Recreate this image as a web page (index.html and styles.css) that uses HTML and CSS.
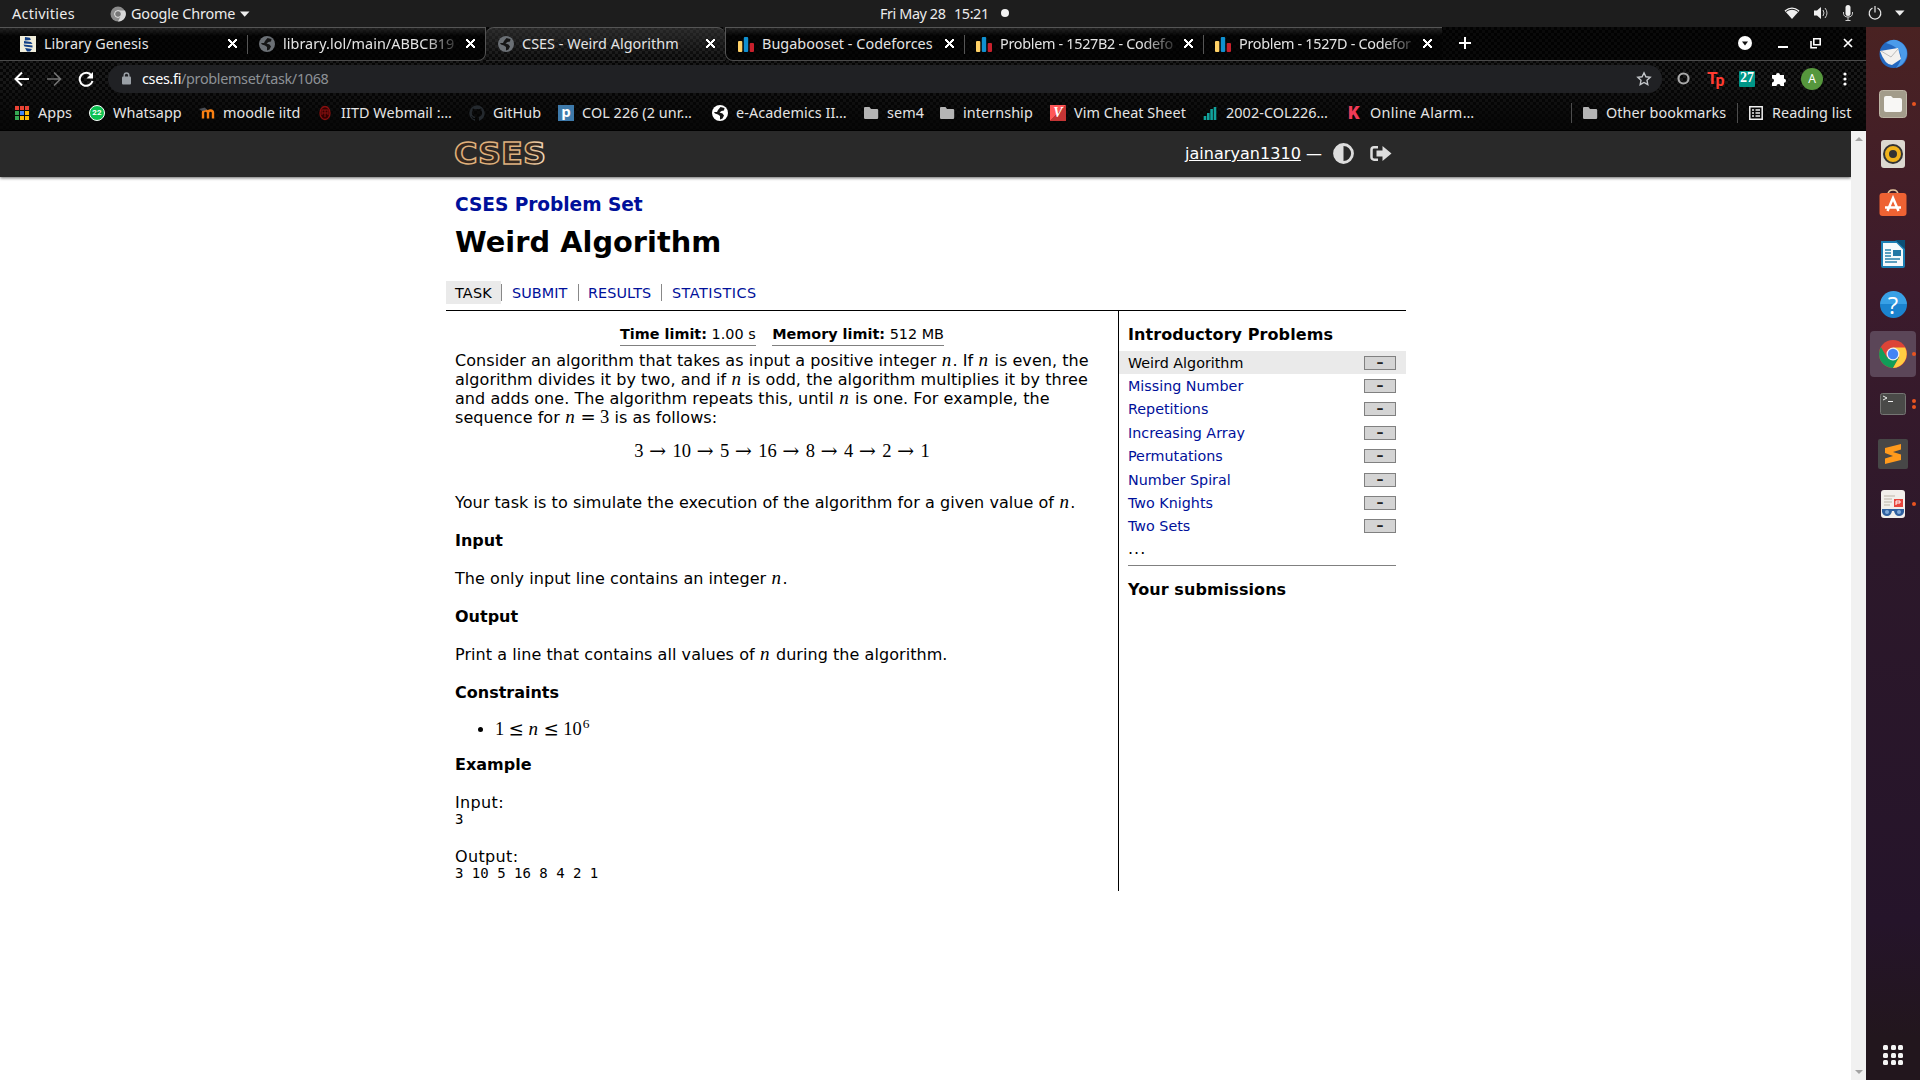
FILE: index.html
```
<!DOCTYPE html>
<html lang="en">
<head>
<meta charset="utf-8">
<title>CSES - Weird Algorithm</title>
<link rel="stylesheet" href="styles.css">
</head>
<body>
<svg class="defs" width="0" height="0">
  <symbol id="globe" viewBox="0 0 16 16"><circle cx="8" cy="8" r="8" fill="currentColor"/><path class="land" d="M8.500 2l4 1-.5 2.500-2.500.5-2 1.500 3 1 1.500 2-1.500 3-2.500 1V11L6 9.500 3 8.500 2 7l3 0 1-2z"/></symbol>
  <symbol id="bars" viewBox="0 0 16 16"><rect y="5" width="4.300" height="11" rx="1" fill="#ffd166"/><rect x="5.800" y="1" width="4.400" height="15" rx="1" fill="#1090d0"/><rect x="11.700" y="7" width="4.300" height="9" rx="1" fill="#c8202c"/></symbol>
  <symbol id="folder" viewBox="0 0 16 16"><path d="M1.500 2h5l1.500 2h6a1.200 1.200 0 0 1 1.200 1.200v7.600A1.200 1.200 0 0 1 14 14H2.200A1.200 1.200 0 0 1 1 12.800V3z" fill="#b4b4b4"/></symbol>
</svg>

<header class="topbar">
  <div class="top-left">
    <span class="activities">Activities</span>
    <svg width="16" height="16" viewBox="0 0 16 16"><circle cx="8" cy="8" r="7.500" fill="#8b8b8b"/><path d="M8 4.500h7A7.500 7.500 0 0 1 8 15.500l3-6z" fill="#d8d8d8"/><circle cx="8" cy="8" r="3.400" fill="#777" stroke="#e8e8e8"/></svg>
    <span class="app-name">Google Chrome</span>
    <svg width="10" height="6" viewBox="0 0 10 6"><path d="M0 .5h9.500L4.700 5.800z" fill="#eee"/></svg>
  </div>
  <div class="clock"><span>Fri May 28</span><span>15:21</span><i></i></div>
  <div class="tray">
    <svg width="16" height="14" viewBox="0 0 16 14"><path d="M.5 4.500Q8-1.500 15.500 4.500L8 13z" fill="#f0f0f0"/><path d="M2 5.500Q8 1 14 5.500" stroke="#1d1d1d" fill="none"/></svg>
    <svg width="16" height="14" viewBox="0 0 16 14"><path d="M1 4.500h3L8 1v12L4 9.500H1z" fill="#f0f0f0"/><path d="M10 4q2 3 0 6M12 2q4 5 0 10" stroke="#ccc" fill="none"/></svg>
    <svg width="12" height="16" viewBox="0 0 12 16"><rect x="3.500" y="0" width="5" height="11" rx="2.500" fill="#f0f0f0"/><path d="M1.500 7v1q0 4 4.500 4t4.500-4V7M6 12v3M3.500 15.500h5" stroke="#ccc" fill="none"/></svg>
    <svg width="14" height="14" viewBox="0 0 14 14"><path d="M4.500 2a5.800 5.800 0 1 0 5 0M7 0v6.500" stroke="#e8e8e8" stroke-width="1.200" fill="none"/></svg>
    <svg width="10" height="6" viewBox="0 0 10 6"><path d="M0 .5h9.500L4.700 5.800z" fill="#eee"/></svg>
  </div>
</header>

<div class="desktop">
<div class="browser">
  <div class="chrome">
    <div class="tabs">
      <div class="tab"><svg width="16" height="16" viewBox="0 0 16 16"><rect width="16" height="16" fill="#f1eedc"/><path d="M5 1l5 .7.8 2.300-6 .5zM4 5l7 1 1.500 2L4 7.500zM3.500 8.500l9 1v2l-8-1zM5 12l7 1-2 2.500H7z" fill="#123f86"/></svg><span class="label">Library Genesis</span><b class="x"></b></div>
      <div class="tab before"><svg class="grey" width="16" height="16"><use href="#globe"/></svg><span class="label fade">library.lol/main/ABBCB19</span><b class="x"></b></div>
      <div class="tab active"><svg class="grey" width="16" height="16"><use href="#globe"/></svg><span class="label">CSES - Weird Algorithm</span><b class="x"></b></div>
      <div class="tab after"><svg width="16" height="16"><use href="#bars"/></svg><span class="label">Bugabooset - Codeforces</span><b class="x"></b></div>
      <div class="tab"><svg width="16" height="16"><use href="#bars"/></svg><span class="label fade tight">Problem - 1527B2 - Codefo</span><b class="x"></b></div>
      <div class="tab"><svg width="16" height="16"><use href="#bars"/></svg><span class="label fade tight">Problem - 1527D - Codefor</span><b class="x"></b></div>
      <div class="tab-tools">
        <svg width="12" height="12" viewBox="0 0 12 12"><path d="M6 0v12M0 6h12" stroke="#fff" stroke-width="2"/></svg>
        <div class="window-tools">
          <svg width="14" height="14" viewBox="0 0 14 14"><circle cx="7" cy="7" r="7" fill="#fff"/><path d="M4 5.500h6L7 9.500z" fill="#111"/></svg>
          <svg width="10" height="10" viewBox="0 0 10 10"><path d="M0 9h10" stroke="#fff" stroke-width="2"/></svg>
          <svg width="11" height="11" viewBox="0 0 11 11"><path d="M3.800.8h6.400v6H3.800zM1 3v6.800h6" stroke="#fff" stroke-width="1.600" fill="none"/></svg>
          <svg width="10" height="10" viewBox="0 0 10 10"><path d="M1 1l8 8M9 1L1 9" stroke="#fff" stroke-width="1.700"/></svg>
        </div>
      </div>
    </div>
    <div class="toolbar">
      <svg width="16" height="16" viewBox="0 0 16 16"><path d="M15 8H2M8 1.500L1.500 8 8 14.500" stroke="#fff" stroke-width="2" fill="none"/></svg>
      <svg width="16" height="16" viewBox="0 0 16 16"><path d="M1 8h13M8 1.500L14.500 8 8 14.500" stroke="#747474" stroke-width="1.600" fill="none"/></svg>
      <svg width="16" height="16" viewBox="0 0 16 16"><path d="M13.500 4.500A6.500 6.500 0 1 0 14.500 10" stroke="#fff" stroke-width="2" fill="none"/><path d="M15 1v6.500H8.500z" fill="#fff"/></svg>
      <div class="address">
        <svg width="10" height="13" viewBox="0 0 10 13"><rect y="4.500" width="9" height="8" rx="1" fill="#9aa0a6"/><path d="M2.200 5V3.300a2.300 2.300 0 0 1 4.600 0V5" stroke="#9aa0a6" stroke-width="1.400" fill="none"/></svg>
        <span class="url"><span class="host">cses.fi</span>/problemset/task/1068</span>
        <svg width="16" height="16" viewBox="0 0 16 16"><path d="M8 1.800l1.900 4 4.300.5-3.200 3 .8 4.400L8 11.500l-3.800 2.200.8-4.400-3.200-3 4.300-.5z" stroke="#c4c7cb" stroke-width="1.400" fill="none"/></svg>
      </div>
      <div class="extensions">
        <svg width="13" height="13" viewBox="0 0 13 13"><circle cx="6.500" cy="6.500" r="5" stroke="#aaa" stroke-width="2.200" fill="none"/></svg>
        <span class="tp">T<small>p</small></span>
        <span class="teal">27</span>
        <svg width="16" height="16" viewBox="0 0 16 16"><path d="M1 4h4a2 2 0 1 1 4 0h4v3.700a2 2 0 1 1 0 4V15H9.500a2 2 0 1 0-4 0H1v-3.600a2 2 0 1 0 0-4z" fill="#fff"/></svg>
        <span class="avatar">A</span>
        <svg width="4" height="14" viewBox="0 0 4 14"><g fill="#fff"><circle cx="2" cy="2" r="1.600"/><circle cx="2" cy="7" r="1.600"/><circle cx="2" cy="12" r="1.600"/></g></svg>
      </div>
    </div>
    <div class="bookmarks">
      <div class="bm"><svg width="16" height="16" viewBox="0 0 16 16"><path d="M1 1h4v4H1zM6 1h4v4H6zM11 1h4v4h-4z" fill="#ea4335"/><path d="M1 6h4v4H1zM1 11h4v4H1z" fill="#34a853"/><path d="M6 6h4v4H6z" fill="#4285f4"/><path d="M11 6h4v4h-4zM6 11h4v4H6zM11 11h4v4h-4z" fill="#fbbc05"/><path d="M5.500 0v16M10.500 0v16M0 5.500h16M0 10.500h16" stroke="#0a0a0a"/></svg><span>Apps</span></div>
      <div class="bm"><span class="wa">22</span><span>Whatsapp</span></div>
      <div class="bm"><svg width="16" height="16" viewBox="0 0 16 16"><path d="M4 13.500V8a2.400 2.400 0 0 1 5 0v5.500M9 13.500V8a2.400 2.400 0 0 1 5 0v5.500" stroke="#f98012" stroke-width="2.400" fill="none"/><path d="M0 4l6-1.500L8 5 3 6z" fill="#4c4f55"/></svg><span>moodle iitd</span></div>
      <div class="bm"><svg width="16" height="16" viewBox="0 0 16 16"><ellipse cx="8" cy="8" rx="5" ry="6.500" fill="#300" stroke="#8a1010" stroke-width="1.300"/><path d="M5 10V5h6v5M8 5v7M5 8h6" stroke="#8a1010" fill="none"/></svg><span>IITD Webmail :…</span></div>
      <div class="bm"><svg width="16" height="16" viewBox="0 0 16 16"><path d="M8 .3a8 8 0 0 0-2.500 15.500c.4.100.5-.2.500-.4v-1.500c-2.200.5-2.700-1-2.700-1-.4-.9-.9-1.100-.9-1.100-.7-.5.100-.5.100-.5.800.100 1.200.8 1.200.8.700 1.300 1.900.9 2.300.7 0-.5.300-.9.500-1.100-1.800-.2-3.600-.9-3.600-4 0-.9.300-1.600.8-2.100 0-.200-.300-1 .1-2.100 0 0 .7-.2 2.200.8a7.600 7.600 0 0 1 4 0c1.500-1 2.200-.8 2.200-.8.400 1.100.100 1.900.100 2.100.5.600.8 1.300.8 2.100 0 3.100-1.900 3.800-3.700 4 .300.300.6.800.6 1.500v2.200c0 .200.100.500.500.400A8 8 0 0 0 8 .3z" fill="#24292e"/></svg><span>GitHub</span></div>
      <div class="bm"><span class="pz">p</span><span>COL 226 (2 unr…</span></div>
      <div class="bm"><svg class="white" width="16" height="16"><use href="#globe"/></svg><span>e-Academics II…</span></div>
      <div class="bm"><svg width="16" height="16"><use href="#folder"/></svg><span>sem4</span></div>
      <div class="bm"><svg width="16" height="16"><use href="#folder"/></svg><span>internship</span></div>
      <div class="bm"><span class="vim">V</span><span>Vim Cheat Sheet</span></div>
      <div class="bm"><svg width="16" height="16" viewBox="0 0 16 16"><path d="M3 15v-4M6.300 15V8M9.600 15V4M13 15V2" stroke="#11a39c" stroke-width="2.600"/></svg><span>2002-COL226…</span></div>
      <div class="bm wide"><span class="kk">K</span><span>Online Alarm…</span></div>
      <div class="bm other"><svg width="16" height="16"><use href="#folder"/></svg><span>Other bookmarks</span></div>
      <div class="bm reading"><svg width="16" height="16" viewBox="0 0 16 16"><path d="M1.800 1.800h12.400v12.400H1.800zM4 5h2M7.500 5H12M4 8h2M7.500 8H12M4 11h2M7.500 11H12" stroke="#f0f0f0" stroke-width="1.500" fill="none"/></svg><span>Reading list</span></div>
    </div>
  </div>

  <div class="viewport">
    <div class="page">
      <div class="site-head">
        <div class="inner">
          <svg class="logo" width="92" height="24" viewBox="0 0 92 24"><defs><linearGradient id="gold"><stop offset="0" stop-color="#e3b27c"/><stop offset=".8" stop-color="#dcb27f"/><stop offset="1" stop-color="#f4dfc4"/></linearGradient></defs><text x="-1" y="22.500" textLength="92" lengthAdjust="spacingAndGlyphs">CSES</text></svg>
          <div class="account"><a>jainaryan1310</a><span>—</span>
            <svg width="21" height="21" viewBox="0 0 21 21"><circle cx="10.500" cy="10.500" r="9" fill="none" stroke="#ddd" stroke-width="2.800"/><path d="M10.500 1a9.500 9.500 0 0 0 0 19z" fill="#ddd"/></svg>
            <svg width="22" height="18" viewBox="0 0 22 18"><path d="M8 2.300H4A2.500 2.500 0 0 0 1.500 4.800v7.400A2.500 2.500 0 0 0 4 14.700h4" stroke="#ddd" stroke-width="2.500" fill="none"/><path d="M6.500 5.500h6V1L21.500 8.500 12.500 16v-4.500h-6z" fill="#ddd"/></svg>
          </div>
        </div>
      </div>
      <div class="container">
        <div class="titles"><h3>CSES Problem Set</h3><h1>Weird Algorithm</h1></div>
        <nav><a class="current">TASK</a><a>SUBMIT</a><a>RESULTS</a><a class="stats">STATISTICS</a></nav>
        <div class="columns">
          <main>
            <ul class="limits"><li><b>Time limit:</b> 1.00 s</li><li><b>Memory limit:</b> 512 MB</li></ul>
            <p>Consider an algorithm that takes as input a positive integer <i class="n">n</i>. If <i class="n">n</i> is even, the<br>algorithm divides it by two, and if <i class="n">n</i> is odd, the algorithm multiplies it by three<br>and adds one. The algorithm repeats this, until <i class="n">n</i> is one. For example, the<br>sequence for <i class="n">n</i><span class="rel">=</span><span class="d">3</span> is as follows:</p>
            <div class="formula"><span>3</span><span class="to">→</span><span>10</span><span class="to">→</span><span>5</span><span class="to">→</span><span>16</span><span class="to">→</span><span>8</span><span class="to">→</span><span>4</span><span class="to">→</span><span>2</span><span class="to">→</span><span>1</span></div>
            <p>Your task is to simulate the execution of the algorithm for a given value of <i class="n">n</i>.</p>
            <h4>Input</h4>
            <p>The only input line contains an integer <i class="n">n</i>.</p>
            <h4>Output</h4>
            <p>Print a line that contains all values of <i class="n">n</i> during the algorithm.</p>
            <h4>Constraints</h4>
            <ul class="bounds"><li><span class="d">1</span><span class="rel">≤</span><i class="n">n</i><span class="rel">≤</span><span class="d">10</span><span class="d sup">6</span></li></ul>
            <h4>Example</h4>
            <p class="io">Input:</p><pre>3</pre>
            <p class="io">Output:</p><pre>3 10 5 16 8 4 2 1</pre>
          </main>
          <aside>
            <h4>Introductory Problems</h4>
            <div class="row here"><a>Weird Algorithm</a><span class="score">–</span></div>
            <div class="row"><a>Missing Number</a><span class="score">–</span></div>
            <div class="row"><a>Repetitions</a><span class="score">–</span></div>
            <div class="row"><a>Increasing Array</a><span class="score">–</span></div>
            <div class="row"><a>Permutations</a><span class="score">–</span></div>
            <div class="row"><a>Number Spiral</a><span class="score">–</span></div>
            <div class="row"><a>Two Knights</a><span class="score">–</span></div>
            <div class="row"><a>Two Sets</a><span class="score">–</span></div>
            <div class="more">...</div>
            <hr>
            <h4>Your submissions</h4>
          </aside>
        </div>
      </div>
    </div>
    <div class="scrollbar"><svg width="8" height="4" viewBox="0 0 8 4"><path d="M4 0l4 4H0z" fill="#a3a3a3"/></svg><svg width="8" height="4" viewBox="0 0 8 4"><path d="M0 0h8L4 4z" fill="#a3a3a3"/></svg></div>
  </div>
</div>

<div class="dock">
  <div class="app"><svg width="30" height="30" viewBox="0 0 30 30"><circle cx="15.500" cy="15" r="14" fill="#2468c0"/><path d="M8 4Q16-3 25 5q6 7 3 14-2 7-10 10 7-8 4-15-3-7-14-10z" fill="#4b9bea"/><path d="M2 12L20 9l3 11-9 6q-7 0-12-14z" fill="#f3f1ef"/><path d="M3 12l10 6 7-8" stroke="#bbb" fill="none"/></svg></div>
  <div class="app one"><svg width="28" height="28" viewBox="0 0 28 28"><rect x=".5" y=".5" width="27" height="27" rx="3" fill="#a39c8b" stroke="#bdb5a5"/><path d="M5 8q0-2 2-2h5l2 2h7q2 0 2 2v10q0 2-2 2H7q-2 0-2-2z" fill="#f8f7f5"/></svg></div>
  <div class="app"><svg width="24" height="28" viewBox="0 0 24 28"><rect width="24" height="28" rx="3" fill="#dcd8d0"/><circle cx="12" cy="14" r="10" fill="#333"/><circle cx="12" cy="14" r="6" fill="none" stroke="#f0b31c" stroke-width="4"/></svg></div>
  <div class="app up"><svg width="28" height="28" viewBox="0 0 28 28"><path d="M9 6q0-5 5-5t5 5" stroke="#e8c9a0" stroke-width="1.500" fill="none"/><rect x=".5" y="4" width="27" height="23" rx="3" fill="#ee6233"/><path d="M8.500 22L14 9l5.500 13M6 18.500h16" stroke="#fff" stroke-width="2.500" fill="none"/></svg></div>
  <div class="app"><svg width="24" height="28" viewBox="0 0 24 28"><path d="M1 2h15l7 7v17q0 1-1 1H2q-1 0-1-1z" fill="#f5f9fb" stroke="#1c7fb4" stroke-width="2"/><path d="M14 0h10v9z" fill="#0b4f76"/><path d="M4 10h6M4 13h6M4 16h6M4 19h15M4 22h12" stroke="#2880aa" stroke-width="1.300"/><rect x="12" y="10" width="8" height="6" fill="#2378a5"/></svg></div>
  <div class="app"><span class="help">?</span></div>
  <div class="app one focused"><svg width="28" height="28" viewBox="0 0 28 28"><circle cx="14" cy="14" r="14" fill="#dc4437"/><path d="M1.900 7A14 14 0 0 0 14 28l6-10.500H8z" fill="#109d58"/><path d="M14 28A14 14 0 0 0 26.100 7.500H14l6 10z" fill="#ffcd42"/><circle cx="14" cy="14" r="6.500" fill="#f1f1f1"/><circle cx="14" cy="14" r="5.200" fill="#4384f5"/></svg></div>
  <div class="app two"><svg width="26" height="22" viewBox="0 0 26 22"><rect x=".5" y=".5" width="25" height="21" rx="2" fill="#4a4a48" stroke="#757573"/><path d="M3 3l4 2-4 2M8 8.500h5" stroke="#eee" fill="none"/></svg></div>
  <div class="app"><svg width="30" height="30" viewBox="0 0 30 30"><rect width="30" height="30" rx="2" fill="#474747"/><path d="M7 9l16-4v5.500l-8 2.500 8 2.500V21L7 25v-5.500l8-2.500-8-3z" fill="#ff9a1c"/></svg></div>
  <div class="app one"><svg width="24" height="28" viewBox="0 0 24 28"><rect width="24" height="28" rx="3" fill="#f2efeb"/><path d="M3 6h11M3 9h8M3 12h8M3 15h6" stroke="#bbb5a8"/><rect x="13" y="9" width="9" height="8" fill="#e8453c"/><path d="M15 15v-4h4v2h-4" stroke="#fff" fill="none"/><path d="M1 19h22v3q-1 4-5 4t-5-5h-2q-1 5-5 5t-5-4z" fill="#2f609f"/><circle cx="6" cy="22" r="2" fill="#7fa8d8"/><circle cx="18" cy="22" r="2" fill="#7fa8d8"/></svg></div>
  <div class="all-apps"><i></i><i></i><i></i><i></i><i></i><i></i><i></i><i></i><i></i></div>
</div>
</div>
</body>
</html>
```
FILE: styles.css
```
* { box-sizing: border-box; }
body { margin: 0; width: 1920px; height: 1080px; overflow: hidden; display: flex; flex-direction: column; background: #fff; font: 14.4px "Noto Sans", sans-serif; }
svg { display: block; flex: none; }
.defs { position: absolute; }

/* GNOME top bar */
.topbar { height: 27px; flex: none; background: #1d1d1d; color: #ececec; display: grid; grid-template-columns: 1fr 132px 1fr; align-items: center; line-height: 25px; }
.top-left { display: flex; align-items: center; padding-left: 12px; }
.activities { width: 98px; letter-spacing: .3px; }
.app-name { padding-left: 5px; width: 114px; letter-spacing: -.15px; }
.clock { display: flex; align-items: center; gap: 7px; letter-spacing: -.4px; margin: -1px 0 0 -14px; white-space: pre; }
.clock span:first-child { width: 67px; }
.clock i { width: 8px; height: 8px; border-radius: 50%; background: #f2f2f2; margin-left: 5px; }
.tray { display: flex; justify-content: flex-end; align-items: center; gap: 13px; padding: 0 15px 1px 0; }
.tray svg:nth-child(4) { margin-left: 1px; }

.desktop { flex: 1; display: flex; min-height: 0; }
.browser { width: 1866px; display: flex; flex-direction: column; }

/* Browser chrome */
.chrome { height: 104px; flex: none; color: #e4e4e4; border-bottom: 1px solid #000; background-color: #050505; background-image: linear-gradient(rgba(0,0,0,0) 0, rgba(0,0,0,0) 50%, rgba(5,5,5,.8) 90%), conic-gradient(#191919 25%, #060606 0 50%, #191919 0 75%, #060606 0); background-size: 100% 100%, 6px 6px; }
.tabs { height: 34px; display: grid; grid-template-columns: 247px 239px 239px 239px 239px 239px 1fr; }
.tab { display: flex; align-items: center; padding: 0 10px 1px 12px; border-top: 1px solid #555; border-bottom: 1px solid #4b4b4b; background: linear-gradient(rgba(40,40,40,.7), rgba(0,0,0,.75) 25%); position: relative; letter-spacing: .04px; }
.tab:first-child { padding-left: 20px; }
.tab::before { content: ""; position: absolute; left: 0; top: 7px; height: 19px; border-left: 1px solid #555; }
.tab:first-child::before, .active::before, .after::before { display: none; }
.before { border-right: 1px solid #555; border-radius: 0 0 8px 0; }
.after { border-left: 1px solid #555; border-radius: 0 0 0 8px; }
.active { background: linear-gradient(rgba(60,60,60,.6), rgba(20,20,20,.1)); border-bottom-color: transparent; border-radius: 8px 8px 0 0; }
.label { flex: 1; margin: 0 3px 0 8px; white-space: nowrap; overflow: hidden; }
.fade { -webkit-mask-image: linear-gradient(90deg, #000 80%, transparent 102%); mask-image: linear-gradient(90deg, #000 80%, transparent 102%); margin-right: 6px; }
.tight { letter-spacing: -.3px; }
.x { width: 9px; height: 9px; flex: none; background: linear-gradient(45deg, transparent 44%, #fff 44% 56%, transparent 56%), linear-gradient(-45deg, transparent 44%, #fff 44% 56%, transparent 56%); }
.grey { color: #6b7075; }
.land { fill: #151515; }
.tab-tools { display: flex; align-items: center; justify-content: space-between; padding: 0 13px 1px 17px; background: rgba(0,0,0,.6); border-bottom: 1px solid #4b4b4b; }
.window-tools { display: flex; align-items: center; gap: 22px; }
.window-tools svg:first-child { margin-right: 4px; }
.toolbar { height: 36px; display: flex; align-items: center; padding: 0 0 1px 14px; gap: 16px; }
.address { margin-left: -2px; width: 1554px; height: 28px; border-radius: 14px; background: #202124; display: flex; align-items: center; padding: 0 10px 0 14px; }
.url { flex: 1; margin-left: 10px; color: #8d9196; letter-spacing: -.33px; line-height: 26px; }
.host { color: #fff; }
.extensions { display: flex; align-items: center; margin-left: -1px; }
.tp { width: 20px; margin-left: 17px; color: #ff3b30; font: bold 17px/16px Roboto, sans-serif; letter-spacing: -2px; }
.tp small { font-size: 16px; position: relative; top: 2px; }
.teal { width: 16px; height: 16px; margin: 0 16px 0 12px; background: #009688; border-radius: 1px; color: #fff; font: bold 14px/14px "Liberation Serif", serif; text-align: center; }
.avatar { width: 22px; height: 22px; margin: 0 20px 0 14px; border-radius: 50%; background: #56973d; color: #fff; font-size: 12px; line-height: 22px; text-align: center; }
.bookmarks { height: 33px; padding: 0 0 2px 14px; display: grid; grid-template-columns: 75px 110px 118px 152px 89px 154px 151px 76px 111px 152px 144px 225px 166px auto; align-items: center; white-space: nowrap; }
.bm { display: flex; align-items: center; gap: 8px; letter-spacing: .07px; height: 20px; }
.bm span:last-child { margin-top: -1px; }
.wide { letter-spacing: .33px; }
.other, .reading { border-left: 1px solid #4d4d4d; padding-left: 10px; }
.wa, .pz, .vim, .kk { width: 16px; height: 16px; text-align: center; color: #fff; }
.wa { background: #0dc152; border: 1px solid #fff; border-radius: 50%; font: bold 8px/14px Roboto, sans-serif; }
.pz { background: #3e7aab; font: bold 15px/13px "Open Sans", sans-serif; }
.vim { background: linear-gradient(135deg, #ff5757 50%, #c43535 50%); font: italic bold 14px/16px "Liberation Serif", serif; }
.kk { color: #f23b57; font: 900 18px/16px Roboto, sans-serif; }
.white { color: #fff; }

/* Web page */
.viewport { flex: 1; display: flex; min-height: 0; }
.page { flex: 1; font: 16px/19px "DejaVu Sans", sans-serif; color: #000; }
.site-head { height: 46px; background: #292929; box-shadow: 0 1px 3px rgba(0,0,0,.6); }
.inner { width: 960px; height: 46px; margin-left: 446px; padding: 0 15px 1px 9px; display: flex; justify-content: space-between; align-items: center; }
.logo { margin-top: -1px; overflow: visible; }
.logo text { font: bold 29.5px "DejaVu Sans", sans-serif; fill: #35281f; stroke: url(#gold); stroke-width: 1.400px; }
.account { display: flex; align-items: center; color: #fff; letter-spacing: .05px; }
.account a { text-decoration: underline; }
.account span { margin: 0 11px 0 5px; }
.account svg + svg { margin-left: 15.500px; margin-right: -.5px; }
.container { width: 960px; margin-left: 446px; }
.titles { padding-left: 9px; height: 104px; }
h3, h1, h4 { margin: 0; }
h3 { font-size: 18.6px; line-height: 22px; padding-top: 16.500px; color: #00109a; letter-spacing: -.06px; white-space: nowrap; }
h1 { font-size: 28.8px; line-height: 34px; margin-top: 9.500px; letter-spacing: .03px; }
nav { display: grid; grid-template-columns: 55px 77px 83px auto; height: 30px; border-bottom: 1px solid #000; align-items: start; font-size: 14.4px; }
nav a { color: #00109a; height: 17px; line-height: 19px; margin-top: 3px; padding-left: 10px; border-left: 1px solid #888; letter-spacing: .08px; }
nav a:nth-child(3) { padding-left: 9px; }
nav .stats { letter-spacing: .47px; }
nav .current { background: #eaeaea; color: #000; height: 23px; line-height: 25px; margin-top: 0; padding-left: 9px; border: 0; letter-spacing: .2px; }
.columns { display: grid; grid-template-columns: 672px 288px; grid-template-rows: 580px; }
main { padding: 13px 0 0 9px; letter-spacing: .055px; white-space: nowrap; }
.limits { list-style: none; margin: 0 9px 5px 0; padding: 0; display: flex; justify-content: center; gap: 16.500px; font-size: 14.4px; line-height: 20px; letter-spacing: 0; }
.limits li { border-bottom: 1px solid #808080; height: 22px; }
p { margin: 0 0 19px; line-height: 19px; }
main h4 { margin-bottom: 19px; line-height: 19px; letter-spacing: 0; }
.n, .d, .rel, .formula { font-family: "Liberation Serif", serif; line-height: 0; letter-spacing: 0; }
.n { font-size: 19px; margin: 0 1.300px 0 .2px; }
.d { font-size: 18.5px; }
.rel { display: inline-block; width: 24px; text-align: center; font: 18px/0 "DejaVu Math TeX Gyre", "Liberation Serif", serif; }
.sup { font-size: 13.5px; position: relative; top: -7px; margin-left: 1px; }
.formula { font-size: 18.5px; line-height: 20px; height: 20px; display: flex; justify-content: center; gap: 5.500px; margin: -5px 9px 32px 0; }
.to { width: 18px; text-align: center; font: 18px/20px "DejaVu Math TeX Gyre", "Liberation Serif", serif; }
.bounds { margin: -1px 0 16px; padding-left: 40px; line-height: 19px; }
.io { letter-spacing: .35px; }
pre { font: 14px/14px "DejaVu Sans Mono", monospace; letter-spacing: 0; margin: -19px 0 19px; height: 16px; }
aside { border-left: 1px solid #000; padding-top: 14px; }
aside h4 { padding-left: 9px; line-height: 19px; margin-bottom: 7px; letter-spacing: .08px; }
.row { height: 23.400px; padding: 1px 10px 0 9px; display: flex; justify-content: space-between; align-items: center; font-size: 14.3px; color: #00109a; }
.here { background: #eaeaea; color: #000; }
.score { width: 32px; height: 14px; margin-top: -1px; border: 1px solid #808080; background: #d4d4d4; color: #222; font: bold 14px/11px "DejaVu Sans", sans-serif; text-align: center; }
.more { padding-left: 9px; height: 27px; line-height: 22px; letter-spacing: 1px; }
hr { margin: 0 10px 14px 9px; border: 0; border-top: 1px solid #808080; }
.scrollbar { width: 15px; background: #f1f1f1; display: flex; flex-direction: column; justify-content: space-between; align-items: center; padding: 6px 0; }

/* Launcher */
.dock { flex: 1; display: flex; flex-direction: column; align-items: center; padding-top: 2px; background: linear-gradient(#4a2222 0, #3c1b2c 25%, #2c182a 50%, #25142a 85%, #22161d 96%); }
.app { width: 54px; height: 50px; flex: none; display: grid; place-items: center; position: relative; }
.up { padding-bottom: 2px; }
.focused { width: 46px; height: 46px; margin: 2px 0; border-radius: 4px; background: #5b4658; }
.one::after, .two::after { content: ""; position: absolute; right: 4px; top: 23px; width: 4px; height: 4px; border-radius: 50%; background: #e95420; }
.focused::after { right: 0; top: 21px; }
.two::after { top: 20px; box-shadow: 0 6px #e95420; }
.help { width: 27px; height: 27px; border-radius: 50%; background: linear-gradient(#38a0e6 50%, #1b83cf 50%); color: #fff; font: 24px/27px "Open Sans", sans-serif; text-align: center; }
.all-apps { margin: auto 0 15px; display: grid; grid-template-columns: repeat(3, 5px); gap: 2.500px; }
.all-apps i { width: 5px; height: 5px; border-radius: 1.500px; background: #f4f4f4; }
```
